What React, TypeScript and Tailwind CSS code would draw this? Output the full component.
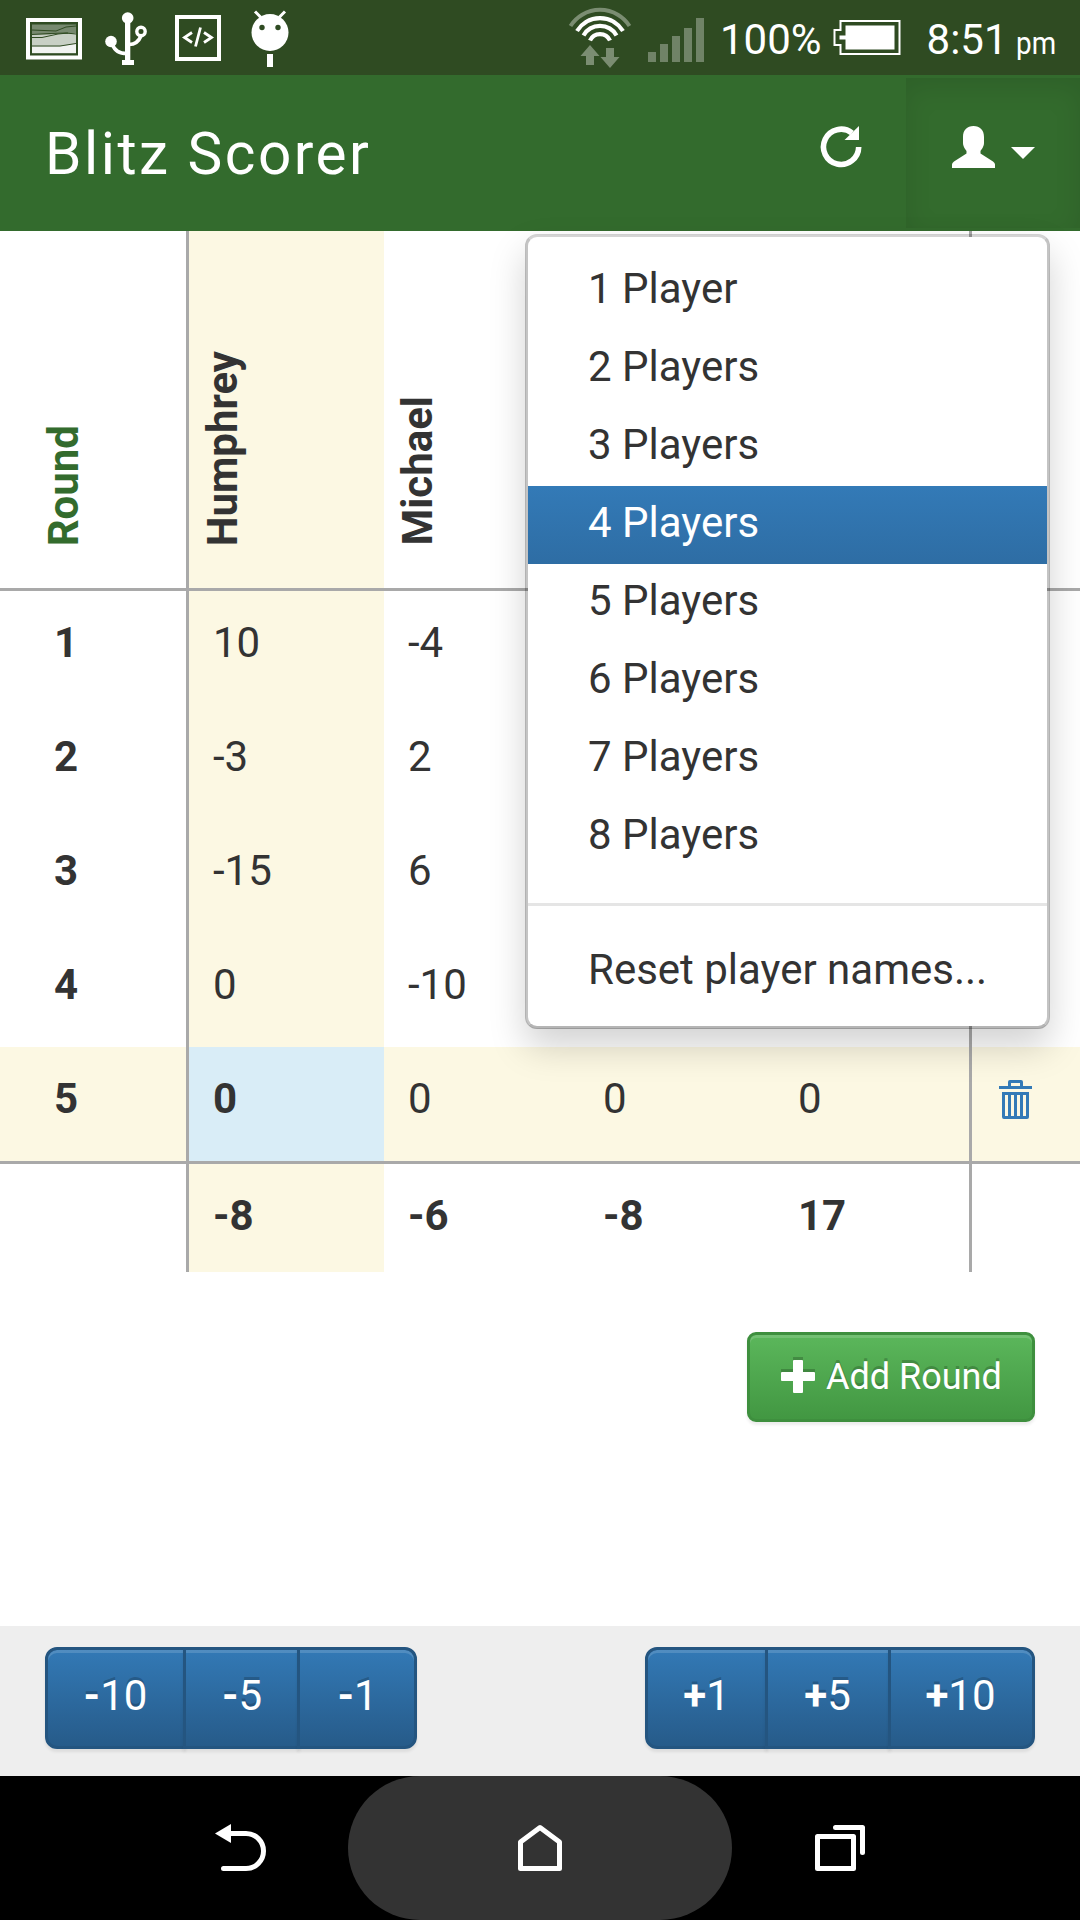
import React from "react";

const players = ["Humphrey", "Michael", "", ""];
const rounds = [
  ["10", "-4", "", ""],
  ["-3", "2", "", ""],
  ["-15", "6", "", ""],
  ["0", "-10", "", ""],
  ["0", "0", "0", "0"],
];
const totals = ["-8", "-6", "-8", "17"];
const menu = ["1 Player", "2 Players", "3 Players", "4 Players", "5 Players", "6 Players", "7 Players", "8 Players"];

function StatusBar() {
  return (
    <div className="flex h-[75px] items-start bg-[#2f4b22] text-white">
      <svg width="560" height="75" viewBox="0 0 560 75" fill="none" className="shrink-0">
        <rect x="28" y="20" width="52" height="37.500" stroke="#fff" strokeWidth="4" />
        <rect x="32" y="24.500" width="44" height="29" fill="#fff" fillOpacity=".35" />
        <path d="M32 34.500H50L60 33L66 34L76 33V53H32Z" fill="#fff" fillOpacity=".6" />
        <path d="M32 46.500H60L76 43.500V53H32Z" fill="#fff" fillOpacity=".75" />
        <path d="M32 30L56 31L66 27L76 26M32 34.500L50 33.500L66 33L76 34M32 37.500L42 37.500L58 34L68 33M32 46H60L76 43.500" stroke="#2f4b22" strokeWidth="1" />
        <g fill="#fff">
          <circle cx="127.700" cy="18" r="5.800" />
          <rect x="125" y="18" width="5.300" height="44" />
          <rect x="122" y="60" width="12" height="5" />
          <circle cx="111" cy="41.500" r="5.800" />
        </g>
        <circle cx="141" cy="31.500" r="4.200" stroke="#fff" strokeWidth="3.400" />
        <path d="M141 36C139 41 135 44.500 129 44.500M112 44C115 51 119 53.500 127 53.500" stroke="#fff" strokeWidth="3.600" />
        <rect x="177" y="17" width="42" height="42" stroke="#fff" strokeWidth="4" />
        <path d="M192 32.500L184.500 37.500L192 42.500M204 32.500L211.500 37.500L204 42.500M200.500 27.500L195.500 46.500" stroke="#fff" strokeWidth="2.800" />
        <circle cx="270" cy="32.500" r="18.500" fill="#fff" />
        <path d="M255 11.500L261 17.500M285 11.500L279 17.500" stroke="#fff" strokeWidth="3" />
        <circle cx="262" cy="27.500" r="2.700" fill="#2f4b22" />
        <circle cx="278" cy="27.500" r="2.700" fill="#2f4b22" />
        <rect x="267" y="54" width="6" height="13" fill="#fff" />
      </svg>
      <svg width="156" height="75" viewBox="560 0 156 75" fill="none" className="shrink-0">
        <path d="M570.500 26A35 35 0 0 1 629.500 26" stroke="#7b8d72" strokeWidth="4" />
        <path d="M577 31A27 27 0 0 1 623 31M583.500 35.500A19 19 0 0 1 616.500 35.500M590 40.500A11 11 0 0 1 610 40.500" stroke="#fff" strokeWidth="4.200" />
        <path d="M590 45L599.500 56H594V65H586V56H580.500ZM610 68L600.500 57H606V48H614V57H619.500Z" fill="#7b8d72" />
        <path d="M648 52h8v10h-8zM660 44h8v18h-8zM672 36h8v26h-8zM684 28h8v34h-8zM696 18h8v44h-8z" fill="#708367" />
      </svg>
      <span className="ml-[4px] mt-[10px] text-[42px] leading-[60px]">100%</span>
      <svg width="70" height="75" viewBox="832 0 70 75" fill="none" className="ml-[10px] shrink-0">
        <path d="M840.500 21H899.500V54H840.500V45H834.500V30H840.500Z" stroke="#fff" strokeWidth="2" />
        <path d="M845.500 25.500H894.500V49.500H845.500V39.500H839.500V35.500H845.500Z" fill="#fff" />
      </svg>
      <span className="ml-[25px] mt-[10px] text-[42px] leading-[60px]">8:51</span>
      <span className="ml-[8px] mt-[13px] inline-block origin-left scale-x-[0.87] text-[32px] leading-[60px]">pm</span>
    </div>
  );
}

function Header() {
  return (
    <header className="flex h-[156px] justify-between bg-[#336b2d] pt-[3px] text-white">
      <h1 className="ml-[45px] mt-[10px] text-[58.500px] leading-[132px] tracking-[2.500px]">Blitz Scorer</h1>
      <div className="flex">
        <svg width="96" height="150" viewBox="810 78 96 150" fill="none">
          <path d="M858.700 147A17.600 17.600 0 1 1 852 133" stroke="#fff" strokeWidth="5.600" />
          <path d="M859 126V140H844.500Z" fill="#fff" />
        </svg>
        <div className="h-[150px] w-[174px] shadow-[inset_0_9px_27px_rgba(0,0,0,0.1)]">
          <svg width="174" height="150" viewBox="906 78 174 150" fill="#fff">
            <path d="M963 137C963 130 967 126 973.500 126S984 130 984 137V143C984 147 981 150 980.500 151V153.500L993 161.500Q995 163 995 164.500V168H952V164.500Q952 163 954 161.500L966.500 153.500V151C966 150 963 147 963 143Z" />
            <path d="M1011 147H1035L1023 159Z" />
          </svg>
        </div>
      </div>
    </header>
  );
}

function PlayerMenu() {
  return (
    <div className="absolute left-[525px] top-[234px] w-[525px] rounded-[12px] border-[3px] border-x-black/23 border-b-black/29 border-t-black/17 bg-white bg-clip-padding py-[15px] shadow-[0_18px_36px_rgba(0,0,0,0.175)]">
      {menu.map((m) => (
        <div
          key={m}
          className={
            m === "4 Players"
              ? "h-[78px] bg-linear-to-b from-[#337ab7] to-[#2e6da4] pl-[60px] pt-[7px] leading-[60px] text-white"
              : "h-[78px] pl-[60px] pt-[7px] leading-[60px]"
          }
        >
          {m}
        </div>
      ))}
      <div className="my-[27px] h-[3px] bg-[#e5e5e5]" />
      <div className="h-[78px] pl-[60px] pt-[7px] leading-[60px]">Reset player names...</div>
    </div>
  );
}

function TrashIcon() {
  return (
    <svg width="33" height="39" viewBox="0 0 33 39" fill="#337ab7" fillRule="evenodd" className="ml-[27px] mt-[33px]">
      <path d="M9 6V2Q9 0 11 0H22Q24 0 24 2V6H33V9H0V6ZM12 3V6H21V3Z" />
      <path d="M3 12H30V37Q30 39 28 39H5Q3 39 3 37ZM6 15V36H9V15ZM12 15V36H15V15ZM18 15V36H21V15ZM24 15V36H27V15Z" />
    </svg>
  );
}

function ScoreTable() {
  return (
    <div className="grid grid-cols-[186px_198px_195px_195px_198px_108px]">
      <div className="flex h-[360px] items-end border-b-[3px] border-[#a9a9a9] pb-[42px] pl-[34px]">
        <span className="rotate-180 font-bold leading-[60px] text-[#336b2d] [writing-mode:vertical-rl]">Round</span>
      </div>
      {players.map((p, i) => (
        <div
          key={i}
          className={
            i === 0
              ? "flex items-end border-b-[3px] border-l-[3px] border-[#a9a9a9] bg-[#fcf8e3] pb-[42px] pl-[4px]"
              : i === 3
                ? "border-b-[3px] border-r-[3px] border-[#a9a9a9]"
                : "flex items-end border-b-[3px] border-[#a9a9a9] pb-[42px] pl-[4px]"
          }
        >
          <span className="rotate-180 font-bold leading-[60px] [writing-mode:vertical-rl]">{p}</span>
        </div>
      ))}
      <div className="border-b-[3px] border-[#a9a9a9]" />
      {rounds.map((r, n) => (
        <React.Fragment key={n}>
          <div
            className={
              n === 4
                ? "h-[117px] border-b-[3px] border-[#a9a9a9] bg-[#fcf8e3] pl-[54px] pt-[22px] font-bold leading-[60px]"
                : "h-[114px] pl-[54px] pt-[22px] font-bold leading-[60px]"
            }
          >
            {n + 1}
          </div>
          {r.map((v, i) => (
            <div
              key={i}
              className={[
                "pl-[24px] pt-[22px] leading-[60px] border-[#a9a9a9]",
                i === 0 ? "border-l-[3px]" : "",
                i === 3 ? "border-r-[3px]" : "",
                n === 4 ? "border-b-[3px]" : "",
                n === 4 && i === 0 ? "bg-[#d9edf7] font-bold" : n === 4 || i === 0 ? "bg-[#fcf8e3]" : "",
              ].join(" ")}
            >
              {v}
            </div>
          ))}
          <div className={n === 4 ? "border-b-[3px] border-[#a9a9a9] bg-[#fcf8e3]" : ""}>{n === 4 && <TrashIcon />}</div>
        </React.Fragment>
      ))}
      <div className="h-[108px]" />
      {totals.map((v, i) => (
        <div
          key={i}
          className={[
            "pl-[24px] pt-[22px] font-bold leading-[60px] border-[#a9a9a9]",
            i === 0 ? "border-l-[3px] bg-[#fcf8e3]" : "",
            i === 3 ? "border-r-[3px]" : "",
          ].join(" ")}
        >
          {v}
        </div>
      ))}
      <div />
    </div>
  );
}

function ScoreButton({ sign, value, className }: { sign: string; value: string; className: string }) {
  return (
    <button
      className={
        "h-[102px] border-[3px] border-[#245580] bg-linear-to-b from-[#337ab7] to-[#265a88] bg-origin-border pb-[4px] leading-[60px] text-white shadow-[inset_0_3px_0_rgba(255,255,255,0.15),0_3px_3px_rgba(0,0,0,0.075)] [text-shadow:0_-3px_0_rgba(0,0,0,0.2)] " +
        className
      }
    >
      <b>{sign}</b>
      {value}
    </button>
  );
}

export default function App() {
  return (
    <div className="relative flex h-[1920px] w-[1080px] flex-col overflow-hidden bg-white font-['Roboto',sans-serif] text-[42px] text-[#333]">
      <StatusBar />
      <Header />
      <ScoreTable />
      <div className="flex flex-1 justify-end pr-[45px] pt-[60px]">
        <button className="flex h-[90px] w-[288px] items-center rounded-[9px] border-[3px] border-[#3e8f3e] bg-linear-to-b from-[#5cb85c] to-[#419641] bg-origin-border pl-[31px] text-[36px] text-white shadow-[inset_0_3px_0_rgba(255,255,255,0.15),0_3px_3px_rgba(0,0,0,0.075)] [text-shadow:0_-3px_0_rgba(0,0,0,0.2)]">
          <svg width="34" height="36" viewBox="0 -3 34 36" className="mb-[5px] mr-[11px]">
            <path d="M12 -3h10v12h12v9H22v12H12V18H0V9H12z" fill="#000" fillOpacity=".2" />
            <path d="M13 0h8q1 0 1 1v11h11q1 0 1 1v7q0 1-1 1H22v11q0 1-1 1h-8q-1 0-1-1V21H1q-1 0-1-1v-7q0-1 1-1h11V1q0-1 1-1z" fill="#fff" />
          </svg>
          <span className="pb-[1px]">Add Round</span>
        </button>
      </div>
      <div className="flex h-[150px] justify-between bg-[#eee] px-[45px] pt-[21px]">
        <div className="flex">
          <ScoreButton sign="-" value="10" className="w-[141px] rounded-l-[12px]" />
          <ScoreButton sign="-" value="5" className="-ml-[3px] w-[117px] pl-[1px]" />
          <ScoreButton sign="-" value="1" className="-ml-[3px] w-[120px] rounded-r-[12px] pl-[1px]" />
        </div>
        <div className="flex">
          <ScoreButton sign="+" value="1" className="w-[123px] rounded-l-[12px]" />
          <ScoreButton sign="+" value="5" className="-ml-[3px] w-[126px] pr-[1px]" />
          <ScoreButton sign="+" value="10" className="-ml-[3px] w-[147px] rounded-r-[12px] pr-[2px]" />
        </div>
      </div>
      <nav className="flex h-[144px] bg-black">
        <svg width="348" height="144" viewBox="0 1776 348 144" fill="none" stroke="#fff" strokeWidth="5" strokeLinecap="round">
          <path d="M229 1833.500H246A17.500 17.500 0 0 1 246 1868.500H223.500" />
          <path d="M215 1833.500L231 1824V1843Z" fill="#fff" stroke="none" />
        </svg>
        <div className="w-[384px] rounded-[72px] bg-[#333]">
          <svg width="384" height="144" viewBox="348 1776 384 144" fill="none" stroke="#fff" strokeWidth="5" strokeLinejoin="round">
            <path d="M520.500 1868.500V1842L540 1827.500L559.500 1842V1868.500Z" />
          </svg>
        </div>
        <svg width="348" height="144" viewBox="732 1776 348 144" fill="none" stroke="#fff" strokeWidth="5" strokeLinecap="round" strokeLinejoin="round">
          <path d="M817.500 1836.500H853.500V1868.500H817.500ZM835.500 1827.500H862.500V1852.500" />
        </svg>
      </nav>
      <PlayerMenu />
    </div>
  );
}
